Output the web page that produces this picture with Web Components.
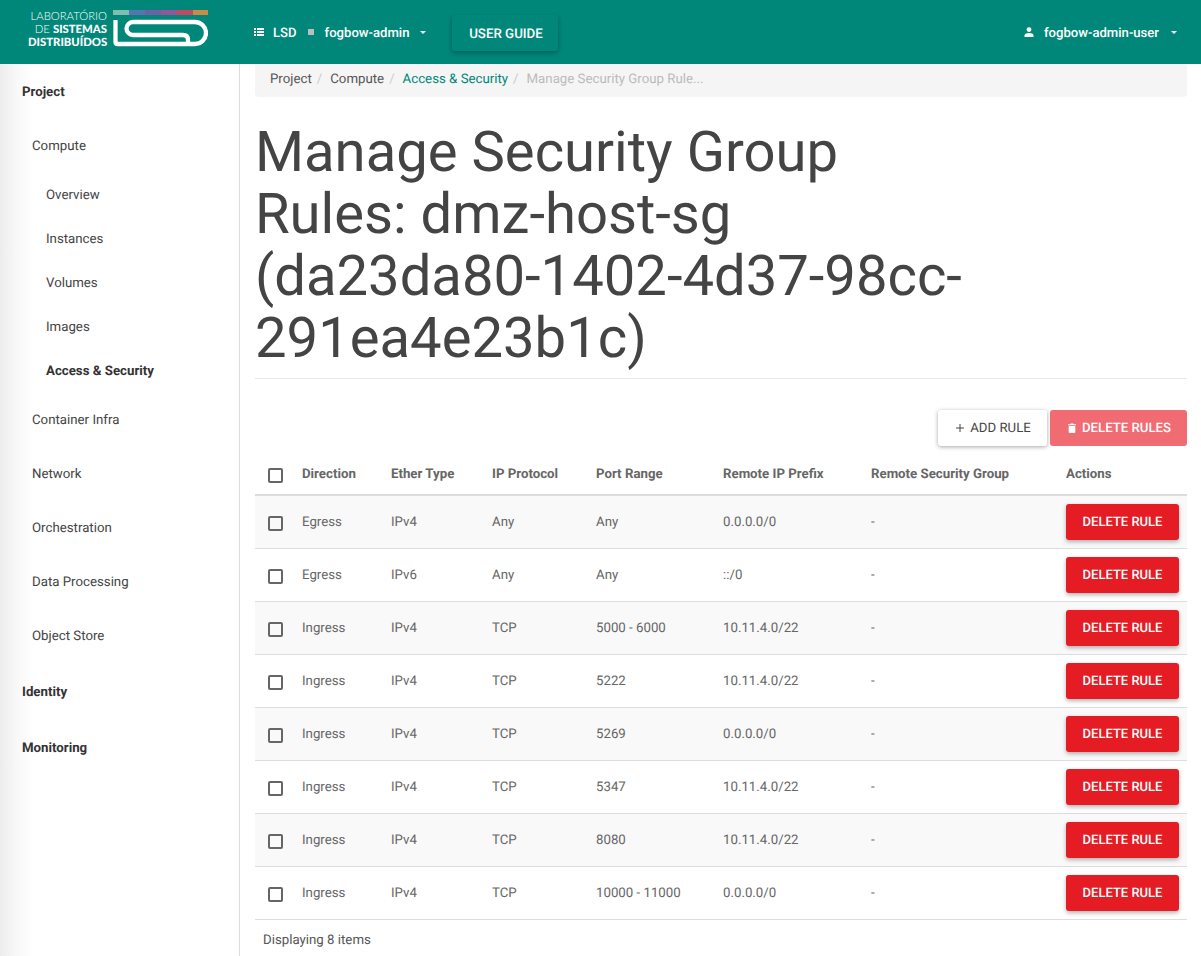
<!DOCTYPE html>
<html>
<head>
<meta charset="utf-8">
<title>Manage Security Group Rules</title>
<style>
    html, body { margin: 0; height: 100%; overflow: hidden; background: #fff; }
    body { font-family: Roboto, "Liberation Sans", sans-serif; font-size: 13.25px; color: #555; text-rendering: geometricPrecision; }
    #app { display: block; height: 956px; overflow: hidden; }
    #row { display: flex; height: 892px; }
    #main { flex: 1; min-width: 0; padding: 0 14px 0 15px; }
</style>
</head>
<body>
<div id="app">
    <top-bar></top-bar>
    <div id="row">
        <side-nav></side-nav>
        <div id="main">
            <bread-crumbs></bread-crumbs>
            <page-title>Manage Security Group Rules: dmz-host-sg (da23da80-1402-4d37-98cc-291ea4e23b1c)</page-title>
            <table-actions></table-actions>
            <rules-table></rules-table>
        </div>
    </div>
</div>

<script>
class CheckMark extends HTMLElement {
    connectedCallback() {
        const shadow = this.attachShadow({ mode: 'open' });
        shadow.innerHTML = `
            <style>
                :host { display: block; width: 15px; height: 15px; box-sizing: border-box; border: 2px solid #666; border-radius: 2px; background: transparent; }
            </style>
        `;
    }
}
customElements.define("check-mark", CheckMark);

class TopBar extends HTMLElement {
    connectedCallback() {
        const shadow = this.attachShadow({ mode: 'open' });
        shadow.innerHTML = `
            <style>
                :host { display: flex; align-items: center; height: 64px; background: #00877a; color: #fff; font-size: 13.1px; font-weight: 500; }
                .logo { display: flex; align-items: flex-start; width: 254px; height: 64px; padding: 10px 0 0 28px; box-sizing: border-box; }
                .logotext { width: 79px; text-align: right; font-family: Lato, sans-serif; font-size: 11.3px; line-height: 13.2px; color: #fff; margin-right: 6px; white-space: nowrap; font-weight: 300; }
                .logotext b { font-weight: 900; }
                .project { display: flex; align-items: center; }
                .t { padding-top: 2px; }
                .square { width: 6px; height: 6px; background: #bdbdbd; margin: 0 11px 0 11px; }
                .caret { width: 0; height: 0; border: 3px solid transparent; border-top-color: #fff; border-bottom: 0; }
                .guide { display: flex; align-items: center; justify-content: center; width: 106px; height: 36px; margin: 1px 0 0 26px; padding: 3px 0 0 1px; box-sizing: border-box; border-radius: 3px; background: #00877a; font-size: 13.3px; box-shadow: 0 2px 5px rgba(0,0,0,.3); }
                .user { display: flex; align-items: center; margin-left: auto; margin-right: 24px; }
            </style>
            <div class="logo">
                <div class="logotext">LABORATÓRIO<br>DE <b>SISTEMAS</b><br><b>DISTRIBUÍDOS</b></div>
                <svg width="95" height="37" viewBox="0 0 95 37">
                    <rect x="0" y="0" width="16" height="5" fill="#7fbfb3"/>
                    <rect x="16" y="0" width="16" height="5" fill="#5a73ae"/>
                    <rect x="32" y="0" width="16" height="5" fill="#6c60a6"/>
                    <rect x="48" y="0" width="16" height="5" fill="#93569a"/>
                    <rect x="64" y="0" width="16" height="5" fill="#c04a62"/>
                    <rect x="80" y="0" width="15" height="5" fill="#c98c47"/>
                    <path d="M2.500 10 V32 Q2.500 34 4.500 34 H82 A11 11 0 0 0 82 12 H20 A6.500 6.500 0 0 0 20 25 H70 Q75 25 75 30 V34" fill="none" stroke="#fff" stroke-width="4.300"/>
                </svg>
            </div>
            <div class="project">
                <svg width="10" height="8" viewBox="0 0 10 8" style="margin-right:9px">
                    <path d="M0 0h2v2H0zM3 0h7v2H3zM0 3h2v2H0zM3 3h7v2H3zM0 6h2v2H0zM3 6h7v2H3z" fill="#fff"/>
                </svg>
                <span class="t">LSD</span>
                <span class="square"></span>
                <span class="t">fogbow-admin</span>
                <span class="caret" style="margin-left:11px"></span>
            </div>
            <div class="guide">USER GUIDE</div>
            <div class="user">
                <svg width="10" height="10" viewBox="0 0 10 10" style="margin-right:10px">
                    <circle cx="5" cy="2.600" r="2.400" fill="#fff"/>
                    <path d="M0.500 10V8.400C0.500 6.800 3 6 5 6s4.500.8 4.500 2.400V10z" fill="#fff"/>
                </svg>
                <span class="t">fogbow-admin-user</span>
                <span class="caret" style="margin-left:12px"></span>
            </div>
        `;
    }
}
customElements.define("top-bar", TopBar);

class SideNav extends HTMLElement {
    connectedCallback() {
        const shadow = this.attachShadow({ mode: 'open' });
        shadow.innerHTML = `
            <style>
                :host { display: block; width: 240px; flex: none; box-sizing: border-box; border-right: 1px solid #ddd; background: linear-gradient(to right, #ececec 0, #f8f8f8 16px, #fff 34px); color: #444; font-size: 13.25px; }
                div { display: flex; align-items: center; white-space: nowrap; box-sizing: border-box; padding-top: 2px; }
                .top { height: 54px; padding-left: 22px; font-weight: 700; color: #333; }
                .group { height: 54px; padding-left: 32px; }
                .leaf { height: 44px; padding-left: 46px; }
                .on { font-weight: 700; color: #333; }
                .tall { height: 56px; }
                .gap { margin-top: 1px; }
            </style>
            <div class="top">Project</div>
            <div class="group">Compute</div>
            <div class="leaf">Overview</div>
            <div class="leaf">Instances</div>
            <div class="leaf">Volumes</div>
            <div class="leaf">Images</div>
            <div class="leaf on">Access &amp; Security</div>
            <div class="group">Container Infra</div>
            <div class="group">Network</div>
            <div class="group">Orchestration</div>
            <div class="group">Data Processing</div>
            <div class="group">Object Store</div>
            <div class="top tall gap">Identity</div>
            <div class="top tall">Monitoring</div>
        `;
    }
}
customElements.define("side-nav", SideNav);

class BreadCrumbs extends HTMLElement {
    connectedCallback() {
        const shadow = this.attachShadow({ mode: 'open' });
        shadow.innerHTML = `
            <style>
                :host { display: flex; align-items: center; height: 33px; padding: 0 15px 2px; box-sizing: border-box; background: #f5f5f5; border-radius: 0 0 4px 4px; font-size: 13.25px; color: #555; white-space: nowrap; }
                i { font-style: normal; color: #ccc; padding: 0 8px 0 5px; }
                a { color: #00877a; }
                span { color: #bbb; }
            </style>
            Project<i>/</i>Compute<i>/</i><a>Access &amp; Security</a><i>/</i><span>Manage Security Group Rule...</span>
        `;
    }
}
customElements.define("bread-crumbs", BreadCrumbs);

class PageTitle extends HTMLElement {
    connectedCallback() {
        const shadow = this.attachShadow({ mode: 'open' });
        shadow.innerHTML = `
            <style>
                :host { display: block; height: 282px; box-sizing: border-box; padding: 24px 0 0 0; border-bottom: 1px solid #e8e8e8; }
                h1 { margin: 0; font-size: 56.2px; font-weight: 400; line-height: 62px; color: #444; max-width: 740px; overflow-wrap: break-word; }
            </style>
            <h1><slot></slot></h1>
        `;
    }
}
customElements.define("page-title", PageTitle);

class TableActions extends HTMLElement {
    connectedCallback() {
        const shadow = this.attachShadow({ mode: 'open' });
        shadow.innerHTML = `
            <style>
                :host { display: flex; justify-content: flex-end; gap: 3px; padding-top: 31px; font-size: 13.2px; font-weight: 500; }
                div { display: flex; align-items: center; justify-content: center; height: 36px; border-radius: 3px; box-sizing: border-box; }
                .add { width: 109px; padding-left: 2px; background: #fff; color: #444; font-weight: 400; box-shadow: 0 1px 4px rgba(0,0,0,.35); }
                .del { width: 137px; padding-left: 2px; background: #f16b72; color: #fff; }
                svg { margin-right: 6px; }
            </style>
            <div class="add">
                <svg width="8" height="8" viewBox="0 0 8 8"><path d="M4 0v8M0 4h8" stroke="#444" stroke-width="1"/></svg>
                ADD RULE
            </div>
            <div class="del">
                <svg width="8" height="10" viewBox="0 0 8 10"><path d="M0 1.200h2.200L2.800.4h2.400l.6.800H8v1H0zM.7 3h6.600v6a1 1 0 0 1-1 1H1.700a1 1 0 0 1-1-1z" fill="#fff"/></svg>
                DELETE RULES
            </div>
        `;
    }
}
customElements.define("table-actions", TableActions);

const COLS = "39px 89px 101px 104px 127px 148px 195px 1fr";

class RuleRow extends HTMLElement {
    connectedCallback() {
        const shadow = this.attachShadow({ mode: 'open' });
        const cells = this.getAttribute("cells").split("|");
        shadow.innerHTML = `
            <style>
                :host { display: grid; grid-template-columns: ${COLS}; align-items: center; height: 53px; box-sizing: border-box; border-bottom: 1px solid #ddd; color: #666; font-size: 13.25px; }
                :host(:nth-child(odd)) { background: #f9f9f9; }
                check-mark { margin: 2px 0 0 13px; }
                span { padding: 0 0 0 8px; }
                span.act { padding: 0; }
                button { display: block; margin-left: 8px; width: 113px; height: 36px; padding: 0; border: 0; border-radius: 3px; background: #e51c23; color: #fff; font: 500 13px Roboto, sans-serif; text-rendering: geometricPrecision; box-shadow: 0 2px 4px rgba(0,0,0,.3); }
            </style>
            <check-mark></check-mark>
            ${cells.map(c => `<span>${c}</span>`).join("")}
            <span class="act"><button>DELETE RULE</button></span>
        `;
    }
}
customElements.define("rule-row", RuleRow);

class RulesTable extends HTMLElement {
    connectedCallback() {
        const shadow = this.attachShadow({ mode: 'open' });
        const rows = [
            "Egress|IPv4|Any|Any|0.0.0.0/0|-",
            "Egress|IPv6|Any|Any|::/0|-",
            "Ingress|IPv4|TCP|5000 - 6000|10.11.4.0/22|-",
            "Ingress|IPv4|TCP|5222|10.11.4.0/22|-",
            "Ingress|IPv4|TCP|5269|0.0.0.0/0|-",
            "Ingress|IPv4|TCP|5347|10.11.4.0/22|-",
            "Ingress|IPv4|TCP|8080|10.11.4.0/22|-",
            "Ingress|IPv4|TCP|10000 - 11000|0.0.0.0/0|-"
        ];
        shadow.innerHTML = `
            <style>
                :host { display: block; padding-top: 5px; }
                .head { display: grid; grid-template-columns: ${COLS}; align-items: center; height: 45px; box-sizing: border-box; border-bottom: 2px solid #ddd; color: #666; font-size: 13.25px; font-weight: 700; padding-top: 3px; }
                .head check-mark { margin: 3px 0 0 13px; }
                .head span { padding-left: 8px; white-space: nowrap; }
                .foot { padding: 13px 8px 0; font-size: 13.25px; color: #555; }
            </style>
            <div class="head">
                <check-mark></check-mark>
                <span>Direction</span><span>Ether Type</span><span>IP Protocol</span><span>Port Range</span><span>Remote IP Prefix</span><span>Remote Security Group</span><span>Actions</span>
            </div>
            <div>${rows.map(r => `<rule-row cells="${r}"></rule-row>`).join("")}</div>
            <div class="foot">Displaying 8 items</div>
        `;
    }
}
customElements.define("rules-table", RulesTable);
</script>
</body>
</html>
